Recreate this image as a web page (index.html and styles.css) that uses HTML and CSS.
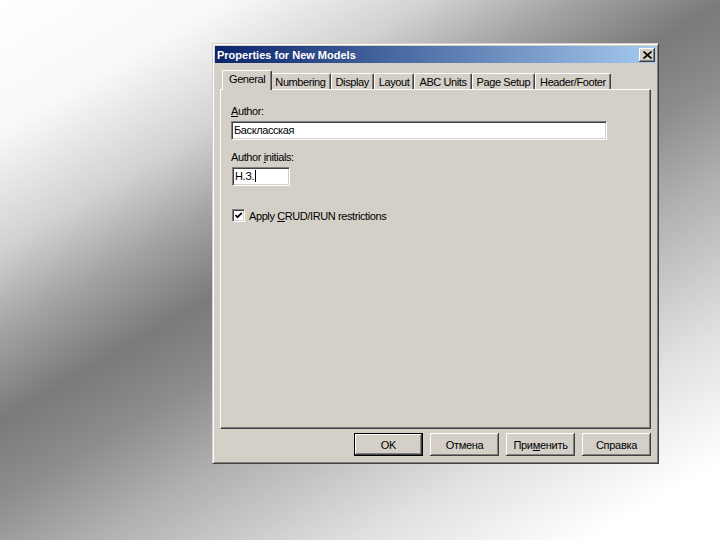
FILE: index.html
```html
<!DOCTYPE html>
<html lang="ru">
<head>
<meta charset="UTF-8">
<title>Properties for New Models</title>
<link rel="stylesheet" href="styles.css">
</head>
<body>
    <div class="stage">
        <div class="dialog">
            <div class="titlebar">
                <span class="title">Properties for New Models</span>
                <span class="close">
                    <svg width="9" height="8" viewBox="0 0 9 8"><path d="M0.5 0.5 L8.5 7.5 M8.5 0.5 L0.5 7.5" stroke="#000" stroke-width="1.6" fill="none"/></svg>
                </span>
            </div>
            <div class="tabs">
                <div class="tab active">General</div>
                <div class="tab">Numbering</div>
                <div class="tab">Display</div>
                <div class="tab">Layout</div>
                <div class="tab">ABC Units</div>
                <div class="tab">Page Setup</div>
                <div class="tab">Header/Footer</div>
            </div>
            <div class="panel">
                <div class="field-label"><u>A</u>uthor:</div>
                <div class="textbox wide">Баскласская</div>
                <div class="field-label second">Author <u>i</u>nitials:</div>
                <div class="textbox short">Н.З.<span class="caret"></span></div>
                <div class="check-row">
                    <span class="checkbox">
                        <svg width="9" height="9" viewBox="0 0 9 9"><polyline points="1.5,4 3.5,6.2 7.8,1.8" stroke="#000" stroke-width="1.7" fill="none"/></svg>
                    </span>
                    <span>Apply <u>C</u>RUD/IRUN restrictions</span>
                </div>
            </div>
            <div class="buttons">
                <button class="btn default">OK</button>
                <button class="btn">Отмена</button>
                <button class="btn">При<u>м</u>енить</button>
                <button class="btn">Справка</button>
            </div>
        </div>
    </div>
</body>
</html>
```
FILE: styles.css
```css
body {
    margin: 0;
    width: 720px;
    height: 540px;
    overflow: hidden;
    font-family: "Liberation Sans", Arial, sans-serif;
    font-size: 11px;
    letter-spacing: -0.4px;
    color: #000;
    background: linear-gradient(150deg, #fff 0%, #f8f8f8 14%, #d2d2d2 26%, #a2a2a2 35%, #7a7a7a 44%, #8c8c8c 52%, #b0b0b0 62%, #e0e0e0 78%, #fff 92%);
}
.stage {
    padding: 43px 0 0 212px;
}
.dialog {
    width: 447px;
    height: 421px;
    box-sizing: border-box;
    background: #d4d0c8;
    border: 1px solid;
    border-color: #d4d0c8 #404040 #404040 #d4d0c8;
    box-shadow: inset 1px 1px #fff, inset -1px -1px #808080;
    padding: 2px;
    display: flex;
    flex-direction: column;
}
.titlebar {
    height: 17px;
    display: flex;
    align-items: center;
    justify-content: space-between;
    padding: 0 1px 0 2px;
    background: linear-gradient(to right, #0a246a, #a6caf0);
    color: #fff;
    font-weight: bold;
    letter-spacing: 0;
}
.close {
    width: 16px;
    height: 14px;
    box-sizing: border-box;
    background: #d4d0c8;
    box-shadow: inset -1px -1px #404040, inset 1px 1px #fff, inset -2px -2px #808080;
    display: flex;
    align-items: center;
    justify-content: center;
}
.tabs {
    margin: 7px 5px 0 5px;
    padding-left: 4px;
    height: 19px;
    display: flex;
    align-items: flex-end;
}
.tab {
    height: 16px;
    box-sizing: border-box;
    padding: 1px 4px 0 4px;
    line-height: 14px;
    border-top: 1px solid #fff;
    border-left: 1px solid #fff;
    border-right: 1px solid #404040;
    border-radius: 2px 2px 0 0;
    box-shadow: inset -1px 0 #808080;
    background: #d4d0c8;
}
.tab.active {
    height: 20px;
    margin: 0 -2px -1px -2px;
    padding: 1px 6px 0 6px;
    position: relative;
    z-index: 1;
}
.panel {
    margin: 0 5px;
    height: 340px;
    box-sizing: border-box;
    padding: 15px 10px;
    border-top: 1px solid #fff;
    border-left: 1px solid #fff;
    border-right: 1px solid #404040;
    border-bottom: 1px solid #404040;
    box-shadow: inset -1px -1px #808080;
}
.field-label {
    line-height: 13px;
}
.field-label.second {
    margin-top: 11px;
}
.textbox {
    margin-top: 3px;
    height: 19px;
    box-sizing: border-box;
    padding-left: 2px;
    line-height: 17px;
    background: #fff;
    border: 1px solid;
    border-color: #808080 #fff #fff #808080;
    box-shadow: inset 1px 1px #404040, inset -1px -1px #d4d0c8;
}
.textbox.wide {
    width: 376px;
}
.textbox.short {
    width: 58px;
    margin-left: 1px;
}
.caret {
    display: inline-block;
    width: 1px;
    height: 12px;
    margin-left: 1px;
    background: #000;
    vertical-align: -2px;
}
.check-row {
    margin-top: 23px;
    margin-left: 1px;
    display: flex;
    align-items: center;
    gap: 4px;
}
.checkbox {
    width: 13px;
    height: 13px;
    box-sizing: border-box;
    background: #fff;
    border: 1px solid;
    border-color: #808080 #fff #fff #808080;
    box-shadow: inset 1px 1px #404040, inset -1px -1px #d4d0c8;
    display: flex;
    align-items: center;
    justify-content: center;
}
.buttons {
    margin: 4px 5px 0 0;
    display: flex;
    justify-content: flex-end;
    gap: 7px;
}
.btn {
    width: 69px;
    height: 23px;
    padding: 0;
    font-family: inherit;
    font-size: 11px;
    letter-spacing: -0.3px;
    color: #000;
    background: #d4d0c8;
    border: none;
    box-shadow: inset -1px -1px #404040, inset 1px 1px #fff, inset -2px -2px #808080;
}
.btn.default {
    border: 1px solid #000;
}
```
